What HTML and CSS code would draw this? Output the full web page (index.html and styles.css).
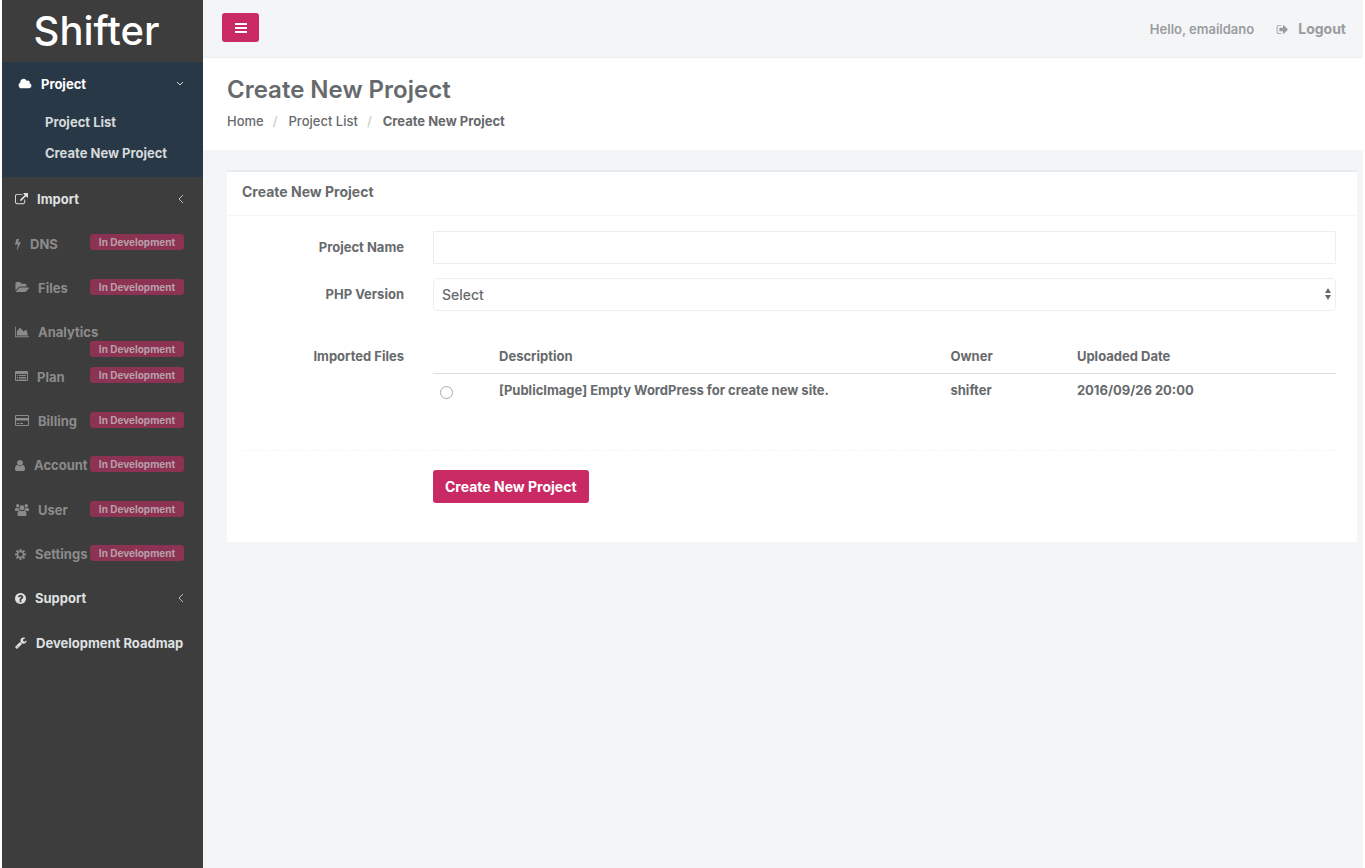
FILE: index.html
```html
<!DOCTYPE html>
<html lang="en">
<head>
<meta charset="utf-8">
<title>Shifter - Create New Project</title>
<link rel="stylesheet" href="styles.css">
</head>
<body>
<svg class="sprite" aria-hidden="true">
  <symbol id="chevron" viewBox="0 0 6 8"><path d="M5 0 1 4l4 4" fill="none" stroke="currentColor" stroke-width="1"/></symbol>
</svg>
<div class="app">
  <aside class="sidebar">
    <a class="brand" href="#">Shifter</a>
    <nav>
      <div class="group">
        <a class="group-head" href="#">
          <svg class="icon" width="14" height="12" viewBox="0 0 2048 1792"><path d="M1984 1152q0 159-112.5 271.5t-271.5 112.5h-1088q-185 0-316.5-131.5t-131.5-316.5q0-132 71-241.5t187-163.5q-2-28-2-43 0-212 150-362t362-150q158 0 286.5 88t187.5 230q70-62 166-62 106 0 181 75t75 181q0 75-41 138 129 30 213 134.5t84 239.5z"/></svg>
          <span>Project</span>
          <svg class="arrow" width="8" height="6" viewBox="0 0 8 6"><path d="M1 1l3 3 3-3" fill="none" stroke="currentColor"/></svg>
        </a>
        <ul class="sub">
          <li><a href="#">Project List</a></li>
          <li><a href="#">Create New Project</a></li>
        </ul>
      </div>
      <ul class="menu">
        <li><a class="item" href="#"><svg class="icon" width="13" height="13" viewBox="0 0 1792 1792"><path d="M1408 928v320q0 119-84.5 203.5t-203.5 84.5h-832q-119 0-203.5-84.5t-84.5-203.5v-832q0-119 84.5-203.5t203.5-84.5h704q14 0 23 9t9 23v64q0 14-9 23t-23 9h-704q-66 0-113 47t-47 113v832q0 66 47 113t113 47h832q66 0 113-47t47-113v-320q0-14 9-23t23-9h64q14 0 23 9t9 23zm384-864v512q0 26-19 45t-45 19-45-19l-176-176-652 652q-10 10-23 10t-23-10l-114-114q-10-10-10-23t10-23l652-652-176-176q-19-19-19-45t19-45 45-19h512q26 0 45 19t19 45z"/></svg><span>Import</span><svg class="arrow" width="6" height="8"><use href="#chevron"/></svg></a></li>
        <li><a class="item item-off" href="#"><svg class="icon" width="6" height="12" viewBox="440 0 910 1792"><path d="M1333 566q18 20 7 44l-540 1157q-13 25-42 25-4 0-14-2-17-5-25.500-19t-4.500-30l197-808-406 101q-4 1-12 1-18 0-31-11-18-15-13-39l201-825q4-14 16-23t28-9h328q19 0 32 12.500t13 29.500q0 8-5 18l-171 463 396-98q8-2 12-2 19 0 32 15z"/></svg><span>DNS</span><span class="badge">In Development</span></a></li>
        <li><a class="item item-off" href="#"><svg class="icon" width="14" height="13" viewBox="0 0 1943 1792"><path d="M1943 952q0 31-31 66l-336 396q-43 51-120.500 86.500t-143.500 35.500h-1088q-34 0-60.500-13t-26.500-43q0-31 31-66l336-396q43-51 120.500-86.500t143.500-35.500h1088q34 0 60.500 13t26.500 43zm-343-344v160h-832q-94 0-197 47.500t-164 119.500l-337 396-5 6q0-4-.5-12.500t-.5-12.500v-960q0-92 66-158t158-66h320q92 0 158 66t66 158v32h544q92 0 158 66t66 158z"/></svg><span>Files</span><span class="badge">In Development</span></a></li>
        <li><a class="item item-off item-long" href="#"><svg class="icon" width="14" height="12" viewBox="0 0 2048 1792"><path d="M2048 1536v128h-2048v-1536h128v1408h1920zm-384-1024l256 896h-1664v-576l448-576 576 576z"/></svg><span>Analytics</span><span class="badge">In Development</span></a></li>
        <li><a class="item item-off" href="#"><svg class="icon" width="13" height="11" viewBox="0 0 13 11"><path fill-rule="evenodd" d="M1 0h11q1 0 1 1v8q0 1-1 1H1q-1 0-1-1V1q0-1 1-1zM1 3v6h11V3zM2 4h1v1H2zM4 4h7v1H4zM2 6h1v1H2zM4 6h7v1H4zM2 7.500h1v1H2zM4 7.500h7v1H4z"/></svg><span>Plan</span><span class="badge">In Development</span></a></li>
        <li><a class="item item-off" href="#"><svg class="icon" width="14" height="11" viewBox="0 0 14 11"><path fill-rule="evenodd" d="M1 0h12q1 0 1 1v9q0 1-1 1H1q-1 0-1-1V1q0-1 1-1zM1 1v2h12V1zM1 5.500V10h12V5.500zM2 8h2v1H2zM5 8h3v1H5z"/></svg><span>Billing</span><span class="badge">In Development</span></a></li>
        <li><a class="item item-off" href="#"><svg class="icon" width="10" height="11" viewBox="256 128 1280 1536" preserveAspectRatio="none"><path d="M1536 1399q0 109-62.500 187t-150.500 78h-854q-88 0-150.500-78t-62.500-187q0-85 8.500-160.500t31.500-152 58.500-131 94-89 134.500-34.500q131 128 313 128t313-128q76 0 134.500 34.500t94 89 58.500 131 31.500 152 8.500 160.500zm-256-887q0 159-112.500 271.500t-271.500 112.500-271.500-112.500-112.500-271.500 112.500-271.500 271.500-112.500 271.500 112.500 112.500 271.500z"/></svg><span>Account</span><span class="badge">In Development</span></a></li>
        <li><a class="item item-off" href="#"><svg class="icon" width="14" height="12" viewBox="0 0 14 12"><circle cx="2.700" cy="1.800" r="1.700"/><circle cx="11.300" cy="1.800" r="1.700"/><circle cx="7" cy="3.800" r="2.500"/><path d="M0 6.500Q0 3.700 1.200 3.700q1.500 1 2.600.3Q3.900 5.500 4.800 6.200 3.300 6.200 2.600 7H1Q0 7 0 6.500zM14 6.500q0-2.800-1.200-2.800-1.500 1-2.600.3-.1 1.500-1 2.200 1.500 0 2.200.8H13q1 0 1-.5zM2.500 10.500Q2.500 6.700 4.700 6.600q2.300 1.500 4.600 0 2.200.1 2.200 3.900Q11.500 12 10 12H4q-1.500 0-1.500-1.500z"/></svg><span>User</span><span class="badge">In Development</span></a></li>
        <li><a class="item item-off" href="#"><svg class="icon" width="11" height="11" viewBox="-11 -11 22 22"><circle r="6" fill="none" stroke="currentColor" stroke-width="3"/><path d="M0-11V-7M0 7V11M-11 0H-7M7 0H11M-8-8-5-5M5 5 8 8M8-8 5-5M-5 5-8 8" stroke="currentColor" stroke-width="4"/></svg><span>Settings</span><span class="badge">In Development</span></a></li>
        <li><a class="item" href="#"><svg class="icon" width="11" height="11" viewBox="128 128 1536 1536"><path d="M1024 1376v-192q0-14-9-23t-23-9h-192q-14 0-23 9t-9 23v192q0 14 9 23t23 9h192q14 0 23-9t9-23zm256-672q0-88-55.500-163t-138.500-116-170-41q-243 0-371 213-15 24 8 42l132 100q7 6 19 6 16 0 25-12 53-68 86-92 34-24 86-24 48 0 85.500 26t37.500 59q0 38-20 61t-68 45q-63 28-115.500 86.500t-52.500 125.500v36q0 14 9 23t23 9h192q14 0 23-9t9-23q0-19 21.500-49.500t54.500-49.500q32-18 49-28.500t46-35 44.500-48 28-60.500 12.500-81zm384 192q0 209-103 385.500t-279.500 279.500-385.500 103-385.500-103-279.500-279.500-103-385.500 103-385.500 279.500-279.500 385.500-103 385.500 103 279.500 279.500 103 385.500z"/></svg><span>Support</span><svg class="arrow" width="6" height="8"><use href="#chevron"/></svg></a></li>
        <li><a class="item" href="#"><svg class="icon" width="12" height="12" viewBox="64 64 1700 1728"><path d="M448 1472q0-26-19-45t-45-19-45 19-19 45 19 45 45 19 45-19 19-45zm644-420l-682 682q-37 37-90 37-52 0-91-37l-106-108q-38-36-38-90 0-53 38-91l681-681q39 98 114.500 173.500t173.500 114.500zm634-435q0 39-23 106-47 134-164.500 217.500t-258.500 83.500q-185 0-316.500-131.500t-131.500-316.500 131.500-316.500 316.500-131.500q58 0 121.500 16.500t107.500 46.500q16 11 16 28t-16 28l-293 169v224l193 107q5-3 79-48.500t135.500-81 70.500-35.500q15 0 23.500 10t8.500 25z"/></svg><span>Development Roadmap</span></a></li>
      </ul>
    </nav>
  </aside>
  <div class="page">
    <header class="topbar">
      <button class="toggle" type="button" aria-label="Toggle menu"><svg class="icon" width="12" height="10" viewBox="0 0 12 10"><path d="M0 0h12v2H0zM0 4h12v2H0zM0 8h12v2H0z"/></svg></button>
      <div class="account">
        <span class="hello">Hello, emaildano</span>
        <a class="logout" href="#"><svg class="icon" width="12" height="11" viewBox="0 128 1632 1536"><path d="M704 1440q0 4 1 20t.5 26.500-3 23.500-10 19.500-20.500 6.500h-320q-119 0-203.500-84.500t-84.500-203.500v-704q0-119 84.500-203.500t203.500-84.500h320q13 0 22.500 9.500t9.500 22.500q0 4 1 20t.5 26.500-3 23.500-10 19.500-20.500 6.500h-320q-66 0-113 47t-47 113v704q0 66 47 113t113 47h312l11.500 1 11.500 3 8 5.500 7 9 2 13.500zm928-544q0 26-19 45l-544 544q-19 19-45 19t-45-19-19-45v-288h-448q-26 0-45-19t-19-45v-384q0-26 19-45t45-19h448v-288q0-26 19-45t45-19 45 19l544 544q19 19 19 45z"/></svg>Logout</a>
      </div>
    </header>
    <section class="heading">
      <h1>Create New Project</h1>
      <ol class="crumbs">
        <li><a href="#">Home</a></li>
        <li><a href="#">Project List</a></li>
        <li><strong>Create New Project</strong></li>
      </ol>
    </section>
    <main class="content">
      <section class="panel">
        <h2>Create New Project</h2>
        <form class="form">
          <div class="row">
            <label for="name">Project Name</label>
            <input class="control" id="name" type="text">
          </div>
          <div class="row">
            <label for="php">PHP Version</label>
            <div class="select">
              <select class="control control-select" id="php"><option>Select</option></select>
              <svg class="updown" width="6" height="12" viewBox="0 0 6 12"><path d="M0 5 3 0l3 5zM0 7h6l-3 5z"/></svg>
            </div>
          </div>
          <div class="row row-files">
            <span class="row-label" id="files">Imported Files</span>
            <table class="files" aria-labelledby="files">
              <thead><tr><th class="col-pick"></th><th class="col-desc">Description</th><th class="col-owner">Owner</th><th>Uploaded Date</th></tr></thead>
              <tbody><tr><td><input class="radio" type="radio" name="file" id="file1"></td><td><label for="file1">[PublicImage] Empty WordPress for create new site.</label></td><td>shifter</td><td>2016/09/26 20:00</td></tr></tbody>
            </table>
          </div>
          <hr class="divider">
          <div class="row"><button class="submit" type="submit">Create New Project</button></div>
        </form>
      </section>
    </main>
  </div>
</div>
</body>
</html>
```
FILE: styles.css
```css
* { box-sizing: border-box; }
body {
  margin: 0;
  background: #fff;
  color: #676a6c;
  font: 500 13px/20px Inter, "Open Sans", sans-serif;
}
a { color: inherit; text-decoration: none; }
ul, ol { list-style: none; margin: 0; padding: 0; }
.sprite { position: absolute; width: 0; height: 0; }
.icon { flex: none; fill: currentColor; }

.app { display: flex; min-height: 100vh; padding: 0 2px; }

.sidebar { flex: none; width: 201px; background: #3d3d3d; color: #dfe0e2; font-weight: 700; }
.brand {
  display: flex;
  align-items: center;
  justify-content: center;
  height: 62px;
  padding-right: 12px;
  color: #fff;
  font-size: 40px;
  font-weight: 500;
}
.group { height: 115px; background: #293846; }
.group-head {
  display: flex;
  align-items: center;
  gap: 9px;
  height: 44px;
  padding: 0 19px 0 16px;
  color: #fff;
}
.arrow { margin-left: auto; opacity: .8; }
.sub a { display: block; padding: 6px 0 5px 43px; color: #d5d9dc; }
.menu { display: grid; grid-auto-rows: 1fr; height: 488px; }
.menu li { display: grid; }
.item {
  position: relative;
  display: flex;
  align-items: center;
  gap: 9px;
  padding: 0 19px 0 13px;
  white-space: nowrap;
}
.item-off { color: #8b8b8b; }
.badge {
  position: absolute;
  top: 13px;
  right: 19px;
  width: 94px;
  border-radius: 3px;
  background: #8c3253;
  color: #b7a0a9;
  font-size: 10px;
  line-height: 16px;
  text-align: center;
}
.item-long .badge { top: 31px; }

.page { flex: 1; min-width: 0; background: #f4f5f7; }
.topbar {
  display: flex;
  align-items: center;
  justify-content: space-between;
  height: 58px;
  padding: 0 17px 2px 19px;
  border-bottom: 1px solid #eceff2;
  color: #999c9e;
}
.toggle {
  display: grid;
  place-items: center;
  width: 37px;
  height: 29px;
  padding: 0;
  border: 0;
  border-radius: 3px;
  background: #c92a63;
  color: #fff;
}
.account { display: flex; align-items: center; gap: 22px; padding-top: 3px; font-weight: 600; }
.logout { display: flex; align-items: center; gap: 10px; font-size: 14px; font-weight: 700; }

.heading { height: 92px; padding: 18px 24px 0; background: #fff; }
h1 { margin: 0; font-size: 24px; line-height: 28px; font-weight: 600; }
.crumbs { display: flex; padding-top: 7px; }
.crumbs li + li::before { content: "/"; padding: 0 11px 0 9px; color: #ccc; }
strong { font-weight: 700; }

.content { padding: 20px 6px 24px 24px; }
.panel { border-top: 2px solid #e7eaec; background: #fff; }
h2 {
  margin: 0;
  padding: 10px 15px 13px;
  border-bottom: 1px solid #f3f5f6;
  font-size: 14px;
  line-height: 20px;
}
.form { padding: 15px 21px 39px 15px; }
.row {
  display: grid;
  grid-template-columns: 162px minmax(0, 1fr);
  column-gap: 29px;
  margin-bottom: 14px;
}
.row > label, .row-label { padding-top: 6px; text-align: right; font-weight: 700; }
.control {
  width: 100%;
  height: 33px;
  padding: 0 8px;
  border: 1px solid #eceff1;
  border-radius: 1px;
  background: #fff;
  color: inherit;
  font: inherit;
}
.select { position: relative; }
.control-select { display: block; appearance: none; border-radius: 5px; font-size: 14px; }
.updown { position: absolute; right: 5px; top: 10px; fill: #676a6c; }
.row-files { margin: 29px 0 44px; }
.files { width: 100%; border-collapse: collapse; table-layout: fixed; font-weight: 700; }
.files th, .files td { padding: 6px 8px; text-align: left; vertical-align: top; }
.files th { padding-bottom: 7px; border-bottom: 1px solid #ddd; }
.files td:first-child { padding-left: 7px; }
.col-pick { width: 58px; }
.col-desc { width: 50%; }
.col-owner { width: 14%; }
.radio {
  display: block;
  appearance: none;
  width: 13px;
  height: 13px;
  margin: 6px 0 0;
  border: 1px solid #aaa;
  border-radius: 50%;
  background: #fff;
}
.divider { margin: 0 0 19px; border: 0; border-top: 1px dashed #f3f5f6; }
.form .row:last-child { margin-bottom: 0; }
.submit {
  grid-column: 2;
  justify-self: start;
  height: 33px;
  padding: 0 12px;
  border: 0;
  border-radius: 3px;
  background: #c92a63;
  color: #fff;
  font: inherit;
  font-size: 14px;
  font-weight: 700;
}
```
